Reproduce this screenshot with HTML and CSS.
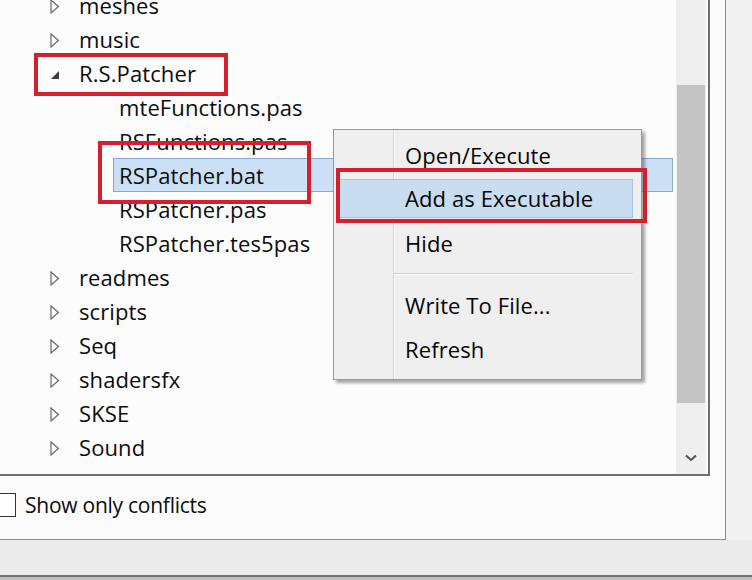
FILE: index.html
```html
<!DOCTYPE html>
<html>
<head>
<meta charset="utf-8">
<link rel="stylesheet" href="styles.css">
</head>
<body>
<div class="screen">
  <div class="main">
    <div class="panel">
      <div class="tree">
        <ul class="rows">
          <li class="row"><span class="arrow"><svg width="10" height="15" viewBox="0 0 10 15"><path d="M1 1 L8.5 7.5 L1 14 Z" fill="none" stroke="#6a6a6a" stroke-width="1.2"/></svg></span><span class="label">meshes</span></li>
          <li class="row"><span class="arrow"><svg width="10" height="15" viewBox="0 0 10 15"><path d="M1 1 L8.5 7.5 L1 14 Z" fill="none" stroke="#6a6a6a" stroke-width="1.2"/></svg></span><span class="label">music</span></li>
          <li class="row"><span class="arrow"><svg width="10" height="15" viewBox="0 0 10 15"><path d="M1 12 L9 12 L9 4 Z" fill="#3c3c3c"/></svg></span><span class="label">R.S.Patcher</span></li>
          <li class="row child"><span class="item">mteFunctions.pas</span></li>
          <li class="row child"><span class="item">RSFunctions.pas</span></li>
          <li class="row child"><span class="item selected">RSPatcher.bat</span></li>
          <li class="row child"><span class="item">RSPatcher.pas</span></li>
          <li class="row child"><span class="item">RSPatcher.tes5pas</span></li>
          <li class="row"><span class="arrow"><svg width="10" height="15" viewBox="0 0 10 15"><path d="M1 1 L8.5 7.5 L1 14 Z" fill="none" stroke="#6a6a6a" stroke-width="1.2"/></svg></span><span class="label">readmes</span></li>
          <li class="row"><span class="arrow"><svg width="10" height="15" viewBox="0 0 10 15"><path d="M1 1 L8.5 7.5 L1 14 Z" fill="none" stroke="#6a6a6a" stroke-width="1.2"/></svg></span><span class="label">scripts</span></li>
          <li class="row"><span class="arrow"><svg width="10" height="15" viewBox="0 0 10 15"><path d="M1 1 L8.5 7.5 L1 14 Z" fill="none" stroke="#6a6a6a" stroke-width="1.2"/></svg></span><span class="label">Seq</span></li>
          <li class="row"><span class="arrow"><svg width="10" height="15" viewBox="0 0 10 15"><path d="M1 1 L8.5 7.5 L1 14 Z" fill="none" stroke="#6a6a6a" stroke-width="1.2"/></svg></span><span class="label">shadersfx</span></li>
          <li class="row"><span class="arrow"><svg width="10" height="15" viewBox="0 0 10 15"><path d="M1 1 L8.5 7.5 L1 14 Z" fill="none" stroke="#6a6a6a" stroke-width="1.2"/></svg></span><span class="label">SKSE</span></li>
          <li class="row"><span class="arrow"><svg width="10" height="15" viewBox="0 0 10 15"><path d="M1 1 L8.5 7.5 L1 14 Z" fill="none" stroke="#6a6a6a" stroke-width="1.2"/></svg></span><span class="label">Sound</span></li>
          <li class="row"><span class="arrow"><svg width="10" height="15" viewBox="0 0 10 15"><path d="M1 1 L8.5 7.5 L1 14 Z" fill="none" stroke="#6a6a6a" stroke-width="1.2"/></svg></span><span class="label">Strings</span></li>
        </ul>
        <div class="scrollbar">
          <div class="track-top"></div>
          <div class="thumb"></div>
          <div class="track-bottom">
            <svg width="12" height="8" viewBox="0 0 12 8"><path d="M1 1.5 L6 6 L11 1.5" fill="none" stroke="#505050" stroke-width="2"/></svg>
          </div>
        </div>
      </div>
      <div class="options">
        <span class="checkbox"></span>
        <span class="option-label">Show only conflicts</span>
      </div>
    </div>
    <div class="side"></div>
  </div>
  <div class="statusbar"></div>
  <div class="edge"></div>

  <div class="menu">
    <div class="menu-item">Open/Execute</div>
    <div class="menu-item active">Add as Executable</div>
    <div class="menu-item">Hide</div>
    <div class="menu-sep"></div>
    <div class="menu-item">Write To File...</div>
    <div class="menu-item">Refresh</div>
  </div>

  <div class="mark mark-folder"></div>
  <div class="mark mark-file"></div>
  <div class="mark mark-menu"></div>
</div>
</body>
</html>
```
FILE: styles.css
```css
html, body {
  margin: 0;
  padding: 0;
}
body {
  font-family: "Open Sans", "Noto Sans", sans-serif;
  font-weight: 500;
  color: #0c0c0c;
  background: #f0f0f0;
}
.screen {
  position: relative;
  width: 752px;
  height: 580px;
  overflow: hidden;
  display: flex;
  flex-direction: column;
}
.main {
  display: flex;
  height: 540px;
}
.panel {
  width: 725px;
  height: 539px;
  border-right: 1px solid #8e8e8e;
  border-bottom: 1px solid #8e8e8e;
  background: #fbfbfb;
  display: flex;
  flex-direction: column;
}
.side {
  flex: 1;
  background: #f1f1f1;
}
.tree {
  width: 708px;
  height: 474px;
  border-right: 2px solid #6f6f6f;
  border-bottom: 2px solid #6f6f6f;
  background: #fcfcfc;
  display: flex;
  overflow: hidden;
}
.rows {
  list-style: none;
  margin: -12px 0 0 0;
  padding: 0;
  flex: 1;
}
.row {
  height: 34px;
  display: flex;
  align-items: center;
  padding-left: 46px;
  font-size: 22px;
  letter-spacing: 0.1px;
}
.arrow {
  width: 18px;
  display: flex;
  justify-content: center;
  margin-top: 2px;
}
.arrow svg {
  display: block;
}
.label {
  margin-left: 15px;
  line-height: 32px;
}
.row.child {
  padding-left: 113px;
}
.item {
  flex: 1;
  height: 32px;
  line-height: 32px;
  margin-right: 3px;
  padding-left: 5px;
  border: 1px solid transparent;
}
.item.selected {
  background: #cbe0f4;
  border-color: #87abcf;
}
.scrollbar {
  width: 30px;
  margin-right: 2px;
  background: #efefef;
  display: flex;
  flex-direction: column;
}
.track-top {
  height: 85px;
}
.thumb {
  height: 318px;
  margin: 0 1px;
  background: #c4c4c4;
}
.track-bottom {
  flex: 1;
  display: flex;
  justify-content: center;
  align-items: flex-end;
  padding-bottom: 12px;
}
.options {
  display: flex;
  align-items: center;
  gap: 9px;
  margin-top: 15px;
}
.checkbox {
  width: 22px;
  height: 22px;
  margin-left: -8px;
  border: 1px solid #333;
  background: #fff;
}
.option-label {
  font-size: 21px;
  letter-spacing: -0.25px;
}
.statusbar {
  height: 35px;
  background: #ebebeb;
}
.edge {
  height: 5px;
  background: linear-gradient(#707070 0, #707070 2px, #bdbdbd 2px);
}
.menu {
  position: absolute;
  left: 333px;
  top: 129px;
  width: 307px;
  height: 246px;
  border: 1px solid #9a9a9a;
  background: #efefef;
  box-shadow: 3px 3px 3px rgba(0, 0, 0, 0.35);
  padding-top: 3px;
  box-sizing: content-box;
  background-image: linear-gradient(to right, transparent 59px, #d7d7d7 59px, #d7d7d7 60px, #fafafa 60px, #fafafa 61px, transparent 61px);
}
.menu-item {
  height: 44px;
  line-height: 44px;
  padding-left: 71px;
  font-size: 22px;
  letter-spacing: 0.1px;
  color: #050505;
  position: relative;
}
.menu-item.active {
  margin: 2px 8px 3px 4px;
  padding-left: 66px;
  background: #c9ddf1;
  border: 1px solid #a7c4e2;
  height: 37px;
  line-height: 37px;
}
.menu-sep {
  height: 18px;
  margin-left: 60px;
  margin-right: 8px;
  background: linear-gradient(transparent 8px, #d2d2d2 8px, #d2d2d2 9px, #fbfbfb 9px, #fbfbfb 10px, transparent 10px);
}
.mark {
  position: absolute;
  border: 4px solid #d41f2e;
  box-sizing: border-box;
}
.mark-folder {
  left: 34px;
  top: 53px;
  width: 194px;
  height: 43px;
}
.mark-file {
  left: 98px;
  top: 141px;
  width: 213px;
  height: 63px;
}
.mark-menu {
  left: 336px;
  top: 168px;
  width: 311px;
  height: 55px;
}
```
